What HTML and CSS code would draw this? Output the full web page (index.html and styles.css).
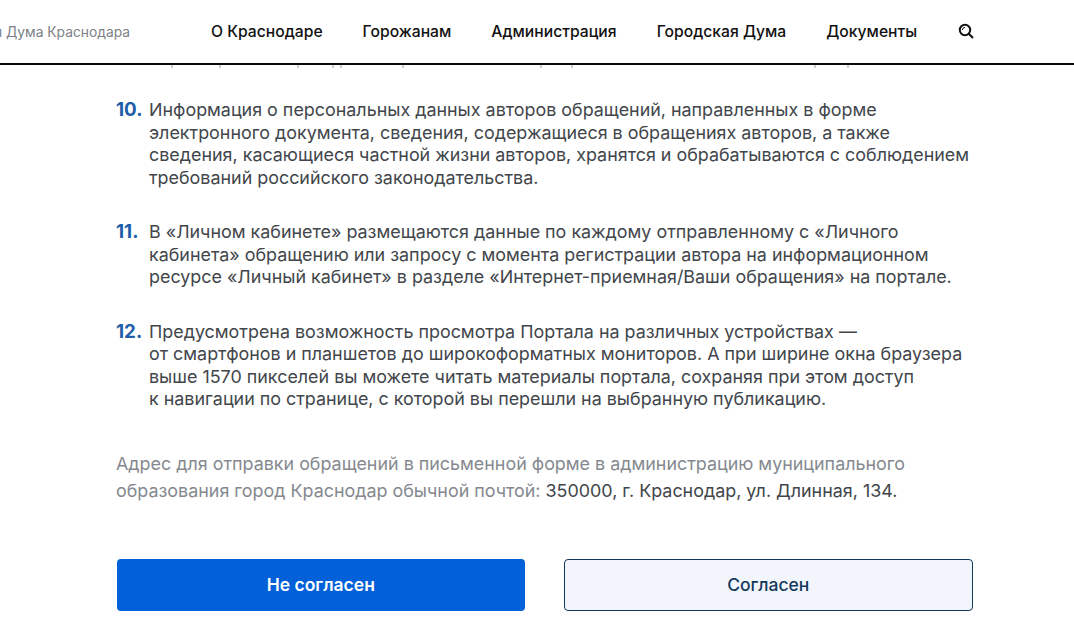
FILE: index.html
```html
<!DOCTYPE html>
<html lang="ru">
<head>
    <meta charset="UTF-8">
    <title>Городская Дума Краснодара</title>
    <link rel="stylesheet" href="styles.css">
</head>
<body>
    <header class="header">
        <div class="brand"><span>Городская Дума Краснодара</span></div>
        <nav class="nav">
            <a href="#">О Краснодаре</a>
            <a href="#">Горожанам</a>
            <a href="#">Администрация</a>
            <a href="#">Городская Дума</a>
            <a href="#">Документы</a>
        </nav>
        <svg class="search-icon" width="16" height="16" viewBox="0 0 16 16" fill="none" stroke="#111" stroke-width="2" aria-label="Поиск">
            <circle cx="7" cy="7" r="5.2"/>
            <path d="M10.8 10.8 15 15"/>
            <path d="M4.4 7A2.6 2.6 0 0 1 7 4.4" stroke-width="1"/>
        </svg>
    </header>

    <main class="content">
        <!-- descenders of the line scrolled under the header -->
        <svg class="scrolled-line" width="1074" height="3" viewBox="0 0 1074 3" stroke="#a0a0a0" aria-hidden="true">
            <path d="M172 0v3M220 0v3M298 0v3M333 0v3M341 0v3M403 0v3M541 0v3M572 0v3M815 0v3M848 0v3"/>
        </svg>

        <div class="text-block">
            <ol class="rules">
                <li class="rule">
                    <span class="num">10.</span>
                    <p>Информация о персональных данных авторов обращений, направленных в форме<br>
                    электронного документа, сведения, содержащиеся в обращениях авторов, а также<br>
                    сведения, касающиеся частной жизни авторов, хранятся и обрабатываются с соблюдением<br>
                    требований российского законодательства.</p>
                </li>
                <li class="rule">
                    <span class="num">11.</span>
                    <p>В «Личном кабинете» размещаются данные по каждому отправленному с «Личного<br>
                    кабинета» обращению или запросу с момента регистрации автора на информационном<br>
                    ресурсе «Личный кабинет» в разделе «Интернет-приемная/Ваши обращения» на портале.</p>
                </li>
                <li class="rule">
                    <span class="num">12.</span>
                    <p>Предусмотрена возможность просмотра Портала на различных устройствах —<br>
                    от смартфонов и планшетов до широкоформатных мониторов. А при ширине окна браузера<br>
                    выше 1570 пикселей вы можете читать материалы портала, сохраняя при этом доступ<br>
                    к навигации по странице, с которой вы перешли на выбранную публикацию.</p>
                </li>
            </ol>

            <p class="address">Адрес для отправки обращений в письменной форме в администрацию муниципального<br>
            образования город Краснодар обычной почтой: <span class="address-value">350000, г. Краснодар, ул. Длинная, 134.</span></p>

            <div class="actions">
                <button class="btn btn-primary">Не согласен</button>
                <button class="btn btn-secondary">Согласен</button>
            </div>
        </div>
    </main>
</body>
</html>
```

FILE: styles.css
```css
* {
    box-sizing: border-box;
    margin: 0;
    padding: 0;
}

html, body {
    height: 100%;
    overflow: hidden;
}

body {
    font-family: Inter, "Liberation Sans", sans-serif;
    background-color: #ffffff;
    color: #42464b;
}

.header {
    height: 65px;
    display: flex;
    align-items: center;
    background-color: #ffffff;
    border-bottom: 2px solid #0b0b0b;
}

.brand {
    width: 130px;
    display: flex;
    justify-content: flex-end;
    overflow: hidden;
    white-space: nowrap;
    font-size: 13.8px;
    color: #7c8187;
}

.nav {
    display: flex;
    gap: 40px;
    margin-left: 81px;
}

.nav a {
    font-size: 15.7px;
    font-weight: 500;
    color: #111111;
    text-decoration: none;
    white-space: nowrap;
}

.search-icon {
    margin-left: 41px;
    margin-top: -1px;
}

.scrolled-line {
    display: block;
}

.text-block {
    padding: 31px 101px 0 116px;
}

.rules {
    list-style: none;
}

.rule {
    display: flex;
    align-items: baseline;
    font-size: 17.9px;
    line-height: 22.5px;
    margin-bottom: 32px;
    white-space: nowrap;
}

.num {
    width: 33px;
    flex-shrink: 0;
    font-size: 18.8px;
    font-weight: 700;
    color: #1f5ea8;
}

.address {
    margin-top: 39.5px;
    font-size: 17.9px;
    line-height: 27px;
    color: #85898f;
    white-space: nowrap;
}

.address-value {
    color: #42464b;
}

.actions {
    display: flex;
    gap: 39px;
    margin-top: 54.5px;
    padding-left: 1px;
}

.btn {
    flex: 1;
    height: 52px;
    border-radius: 4px;
    font-family: inherit;
    font-size: 17.5px;
    font-weight: 600;
    cursor: pointer;
}

.btn-primary {
    background-color: #0260d8;
    border: none;
    color: #ffffff;
}

.btn-secondary {
    background-color: #f2f6fc;
    border: 1px solid #12395b;
    color: #12395b;
    font-weight: 500;
}
```
